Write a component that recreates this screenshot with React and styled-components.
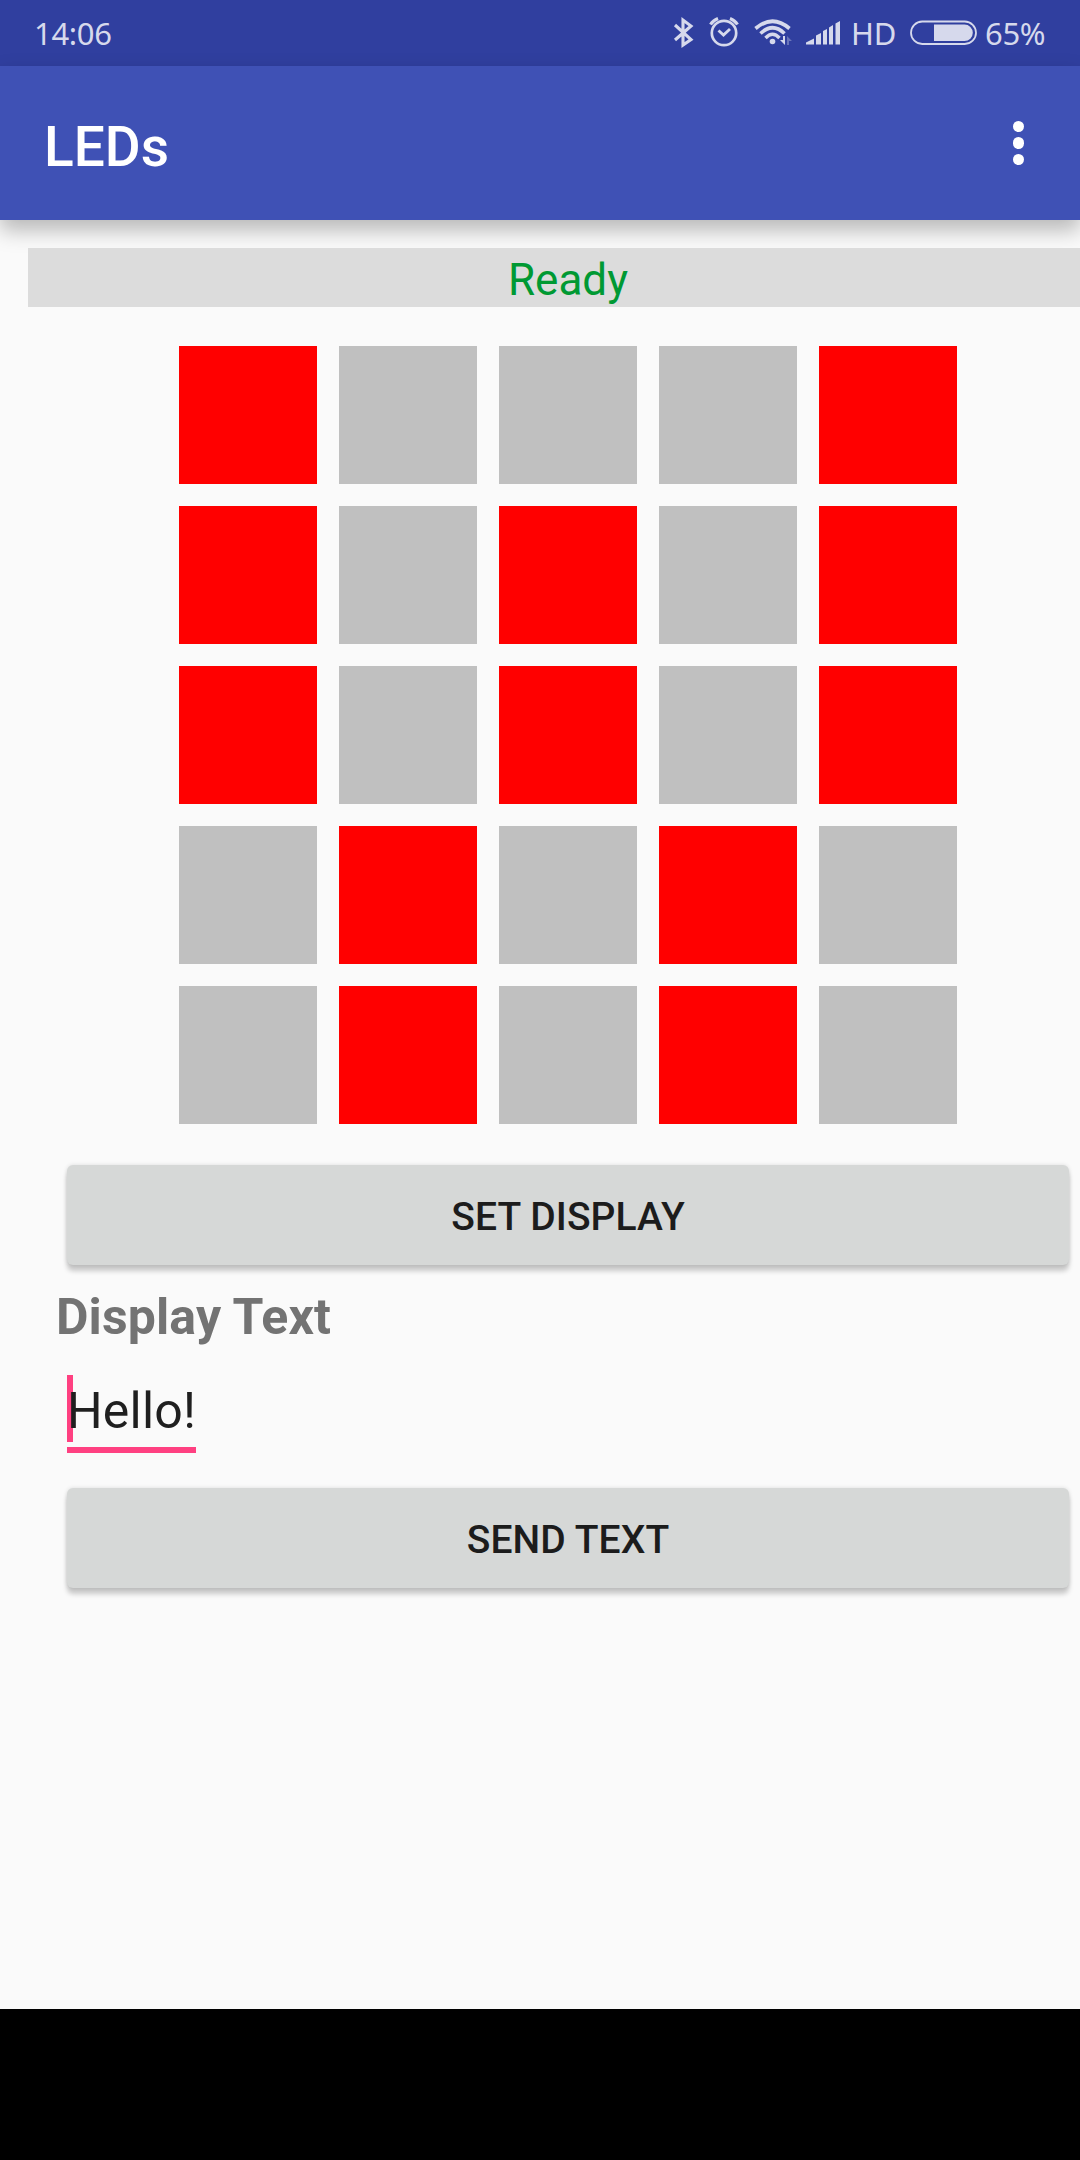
import styled, { createGlobalStyle } from "styled-components";

const GlobalStyle = createGlobalStyle`
  * {
    box-sizing: border-box;
  }
  body {
    margin: 0;
    background-color: #fafafa;
  }
`;
const Screen = styled.div`
  display: flex;
  flex-direction: column;
  width: 1080px;
  height: 2160px;
  overflow: hidden;
  background-color: #fafafa;
  font-family: Roboto, sans-serif;
`;
const StatusBar = styled.header`
  display: flex;
  align-items: center;
  justify-content: space-between;
  flex: none;
  height: 66px;
  padding: 0 36px 0 34px;
  background-color: #303f9f;
  color: #d6d9ec;
  font-family: "Noto Sans", sans-serif;
  font-size: 31px;
  letter-spacing: -0.3px;
  line-height: 64px;
`;
const StatusIcons = styled.div`
  display: flex;
  align-items: center;
  height: 64px;

  svg {
    display: block;
    flex: none;
  }
`;
const StatusText = styled.span`
  width: ${({ $width }) => $width}px;
  white-space: nowrap;
`;
const AppBar = styled.nav`
  display: flex;
  align-items: center;
  justify-content: space-between;
  flex: none;
  position: relative;
  height: 154px;
  padding: 0 56px 0 44px;
  background-color: #3f51b5;
  box-shadow: 0 10px 20px rgba(0, 0, 0, 0.27);

  h1 {
    margin: 0;
    padding-top: 8px;
    color: #fff;
    font-size: 55px;
    font-weight: 500;
    line-height: 64px;
  }
`;
const MenuButton = styled.button`
  display: flex;
  flex-direction: column;
  gap: 5px;
  padding: 0;
  border: none;
  background: none;

  span {
    width: 11.5px;
    height: 11.5px;
    border-radius: 50%;
    background-color: #fff;
  }
`;
/* keeps the full screen width after its left margin, so the right edge is cut */
const Content = styled.main`
  display: flex;
  flex-direction: column;
  flex: 1;
  width: 1080px;
  margin: 28px 0 0 28px;
`;
const Status = styled.p`
  height: 59px;
  margin: 0;
  position: relative;
  background-color: #dcdcdc;
  color: #009933;
  font-size: 44px;
  line-height: 64px;
  text-align: center;
`;
const LedGrid = styled.section`
  display: grid;
  grid-template-columns: repeat(5, 138px);
  grid-auto-rows: 138px;
  gap: 22px;
  justify-content: center;
  margin-top: 39px;
`;
const Led = styled.div`
  background-color: ${({ $on }) => ($on ? "#ff0000" : "#c0c0c0")};
`;
const Button = styled.button`
  height: 100px;
  margin: ${({ $top }) => $top}px 39px 0;
  padding: 4px 0 0;
  border: none;
  border-radius: 6px;
  background-color: #d6d8d7;
  box-shadow: 0 6px 5px rgba(0, 0, 0, 0.2), 0 0 4px rgba(0, 0, 0, 0.12);
  color: #1c1c1c;
  font-family: inherit;
  font-size: 39px;
  font-weight: 500;
  letter-spacing: 0.1px;
  line-height: 46px;
  text-transform: uppercase;
`;
const Label = styled.h2`
  margin: 23px 0 0 28px;
  color: #737373;
  font-size: 50px;
  font-weight: 700;
  letter-spacing: 0.12px;
  line-height: 58px;
`;
const Field = styled.div`
  align-self: flex-start;
  position: relative;
  width: 129px;
  height: 79px;
  margin: 28px 0 0 39px;
  border-bottom: 6px solid #ff4081;
  color: #1f1f1f;
  font-size: 50px;
  letter-spacing: 0.2px;
  line-height: 75px;
  white-space: nowrap;

  span {
    position: relative;
  }
`;
const Caret = styled.i`
  position: absolute;
  top: 1px;
  left: 0;
  width: 6px;
  height: 67px;
  background-color: #ff4081;
`;
const NavBar = styled.footer`
  flex: none;
  height: 151px;
  background-color: #000;
`;

const leds = ["10001", "10101", "10101", "01010", "01010"];

function Icons() {
  return (
    <svg width="179" height="64" viewBox="0 0 179 64" fill="none" stroke="#d6d9ec">
      <path d="M3 24L19 38.500L11 44V19L19 25L3 39" strokeWidth="3.100" />
      <circle cx="52" cy="32" r="12.200" strokeWidth="2.700" />
      <path d="M46.500 29.500L51.500 34L58 28" strokeWidth="2.900" />
      <path d="M38.500 23.500Q41 19.500 46 17.500M65.500 23.500Q63 19.500 58 17.500" strokeWidth="3.100" />
      <path d="M83.500 27.500Q100.500 13 117.500 27.500" strokeWidth="3.700" />
      <path d="M88.500 32.500Q100.500 21 112.500 32.500" strokeWidth="3.600" />
      <path d="M93.500 37Q100.500 29.500 107.500 37" strokeWidth="3.400" />
      <g fill="#d6d9ec" stroke="none">
        <circle cx="100.500" cy="40.500" r="2.800" />
        <path d="M111 35H113V44L108 39H111Z" />
        <path d="M115 44V35L120 40H117V44Z" opacity="0.35" />
        <path d="M134 43.500V41.500L142 37.500V43.500ZM144 43.500V34.500L149 32V43.500ZM151 43.500V30L155 28V43.500ZM157 43.500V26.500L161 24V43.500ZM163.500 43.500V22.500L168 20V43.500Z" />
      </g>
    </svg>
  );
}

function Battery() {
  return (
    <svg width="75" height="26" viewBox="0 0 75 26">
      <rect x="1" y="1.500" width="65" height="22.500" rx="11.250" fill="none" stroke="#d6d9ec" strokeWidth="1.800" />
      <path d="M24 4.500H54.500a8.300 8.300 0 0 1 0 16.600H24Z" fill="#d6d9ec" />
    </svg>
  );
}

export default function App() {
  return (
    <Screen>
      <GlobalStyle />
      <StatusBar>
        <StatusText>14:06</StatusText>
        <StatusIcons>
          <Icons />
          <StatusText $width={59}>HD</StatusText>
          <Battery />
          <StatusText $width={59}>65%</StatusText>
        </StatusIcons>
      </StatusBar>
      <AppBar>
        <h1>LEDs</h1>
        <MenuButton aria-label="More options">
          <span />
          <span />
          <span />
        </MenuButton>
      </AppBar>
      <Content>
        <Status>Ready</Status>
        <LedGrid>
          {leds.map((row, y) =>
            [...row].map((led, x) => <Led key={`${y}-${x}`} $on={led === "1"} />)
          )}
        </LedGrid>
        <Button $top={41}>Set display</Button>
        <Label>Display Text</Label>
        <Field>
          <Caret />
          <span>Hello!</span>
        </Field>
        <Button $top={35}>Send text</Button>
      </Content>
      <NavBar />
    </Screen>
  );
}
